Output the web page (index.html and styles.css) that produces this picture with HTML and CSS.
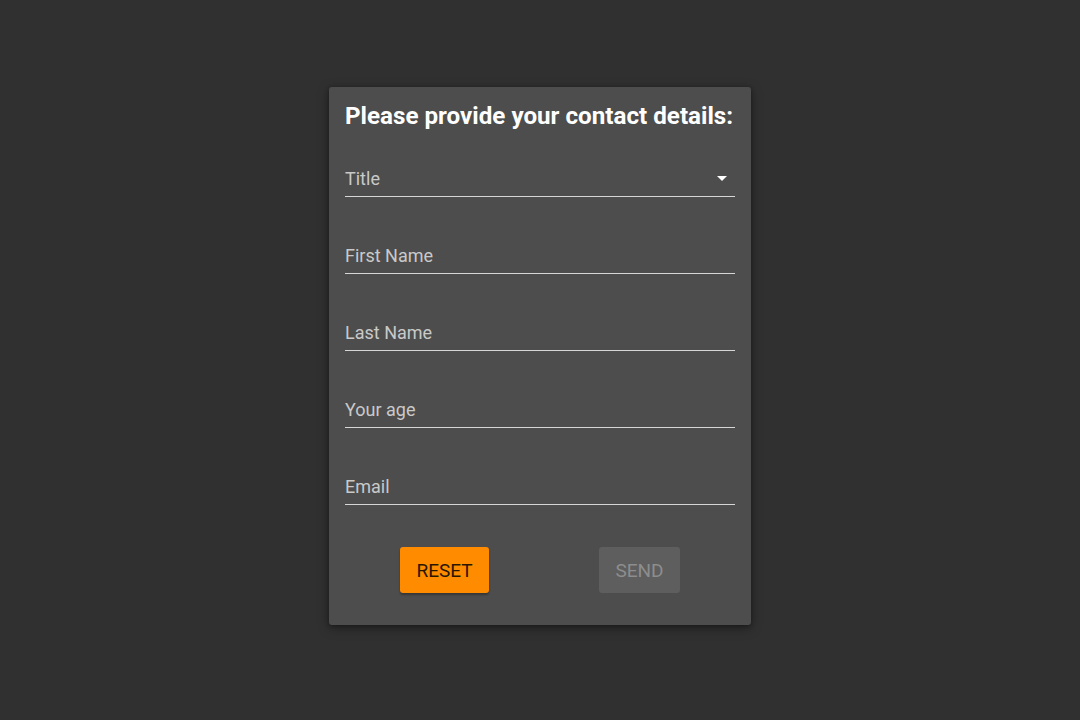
FILE: index.html
```html
<!DOCTYPE html>
<html>
<head>
<meta charset="utf-8">
<link rel="stylesheet" href="styles.css">
</head>
<body>
<div class="page">
  <form class="card">
    <h1 class="heading">Please provide your contact details:</h1>
    <div class="field">
      <span class="label">Title</span>
      <svg class="arrow" width="10" height="5" viewBox="0 0 10 5"><path d="M0 0 L10 0 L5 5 Z" fill="#ffffff"/></svg>
    </div>
    <div class="field"><span class="label">First Name</span></div>
    <div class="field"><span class="label">Last Name</span></div>
    <div class="field"><span class="label">Your age</span></div>
    <div class="field"><span class="label">Email</span></div>
    <div class="actions">
      <button type="button" class="btn btn-reset">RESET</button>
      <button type="button" class="btn btn-send">SEND</button>
    </div>
  </form>
</div>
</body>
</html>
```

FILE: styles.css
```css
html, body {
  margin: 0;
  padding: 0;
  height: 100%;
  background: #303030;
  font-family: Roboto, "Liberation Sans", sans-serif;
}
.page {
  height: 720px;
  display: flex;
  justify-content: center;
  padding-top: 87px;
  box-sizing: border-box;
}
.card {
  width: 422px;
  height: 538px;
  box-sizing: border-box;
  background: #4d4d4d;
  border-radius: 3px;
  padding: 15px 16px 0;
  box-shadow: 0 3px 12px rgba(0,0,0,0.35), 0 1px 4px rgba(0,0,0,0.3);
  display: flex;
  flex-direction: column;
}
.heading {
  margin: 0;
  font-size: 24.2px;
  font-weight: 700;
  color: #ffffff;
  line-height: 28px;
  white-space: nowrap;
}
.field {
  height: 36px;
  border-bottom: 1px solid #d6d6d6;
  display: flex;
  align-items: center;
  justify-content: space-between;
  margin-top: 41px;
  box-sizing: border-box;
}
.field:first-of-type {
  margin-top: 31px;
}
.label {
  font-size: 18px;
  color: #c9c9c9;
}
.arrow {
  margin-right: 8px;
}
.actions {
  display: flex;
  justify-content: space-around;
  margin-top: 42px;
}
.btn {
  height: 46px;
  border: none;
  border-radius: 3px;
  font-family: Roboto, "Liberation Sans", sans-serif;
  font-size: 19px;
  padding: 0;
}
.btn-reset {
  width: 89px;
  background: #ff8c00;
  color: #2a1600;
  box-shadow: 0 2px 2px rgba(0,0,0,0.3);
}
.btn-send {
  width: 81px;
  background: #5e5e5e;
  color: #8d8d8d;
}
```
